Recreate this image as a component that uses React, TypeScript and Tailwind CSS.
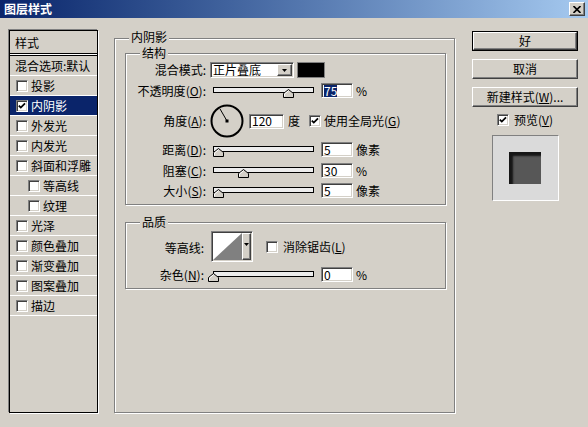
import type { ReactNode } from 'react'

const sunken =
  'border border-t-[#808080] border-l-[#808080] border-r-white border-b-white bg-white shadow-[inset_1px_1px_0_#404040,inset_-1px_-1px_0_#d4d0c8]'
const raised =
  'border border-t-white border-l-white border-r-[#404040] border-b-[#404040] bg-[#d4d0c8] shadow-[inset_-1px_-1px_0_#808080]'

function Mn({ children }: { children: string }) {
  return (
    <>
      (<span className="underline underline-offset-[1px]">{children}</span>)
    </>
  )
}

function Check({ checked }: { checked?: boolean }) {
  return (
    <span className={`flex h-[12px] w-[12px] shrink-0 items-center justify-center ${sunken}`}>
      {checked && (
        <svg width="8" height="8" viewBox="0 0 8 8">
          <path d="M0.8 3.6 L2.8 5.6 L7 1.4" stroke="#000" strokeWidth="1.8" fill="none" />
        </svg>
      )}
    </span>
  )
}

function Group({
  title,
  className,
  labelClass = '-top-[7px]',
  children,
}: {
  title: string
  className: string
  labelClass?: string
  children?: ReactNode
}) {
  return (
    <div className={`relative flex flex-col border border-[#808080] shadow-[inset_1px_1px_0_#fff,1px_1px_0_#fff] ${className}`}>
      <span className={`absolute left-[14px] h-[12px] bg-[#d4d0c8] px-[2px] leading-[12px] ${labelClass}`}>{title}</span>
      {children}
    </div>
  )
}

function Slider({ value }: { value: number }) {
  return (
    <div className="relative h-[15px] w-[101px] pt-[4px]">
      <div className="h-[6px] border border-black bg-[#ececec]" />
      <svg className="absolute top-[6px]" style={{ left: value - 5 }} width="11" height="9" viewBox="0 0 11 9">
        <path d="M5.5 0.5 L10.5 4.5 V8.5 H0.5 V4.5 Z" fill="#d4d0c8" stroke="#000" />
        <path d="M1.5 7.5 V5 L5.5 1.8" stroke="#fff" fill="none" />
      </svg>
    </div>
  )
}

function NumField({ value, wide, selected }: { value: string; wide?: boolean; selected?: boolean }) {
  return (
    <span className={`flex h-[15px] items-center pl-[2px] ${wide ? 'w-[35px]' : 'w-[32px]'} ${sunken}`}>
      <span className={selected ? 'bg-[#0a246a] text-white' : ''}>{value}</span>
    </span>
  )
}

function SliderRow({ label, mn, value, unit, className }: { label: string; mn: string; value: number; unit: string; className: string }) {
  return (
    <div className={`flex h-[15px] items-center ${className}`}>
      <span className="w-[80px] text-right">
        {label}
        <Mn>{mn}</Mn>:
      </span>
      <span className="ml-[7px]">
        <Slider value={value} />
      </span>
      <span className="ml-[7px]">
        <NumField value={String(value)} selected={mn === 'O'} />
      </span>
      <span className="ml-[3px]">{unit}</span>
    </div>
  )
}

const listItems: Array<{ label: string; checked?: boolean; indent?: boolean; active?: boolean }> = [
  { label: '投影' },
  { label: '内阴影', checked: true, active: true },
  { label: '外发光' },
  { label: '内发光' },
  { label: '斜面和浮雕' },
  { label: '等高线', indent: true },
  { label: '纹理', indent: true },
  { label: '光泽' },
  { label: '颜色叠加' },
  { label: '渐变叠加' },
  { label: '图案叠加' },
  { label: '描边' },
]

function StyleList() {
  return (
    <div className="ml-[9px] mt-[12px] flex h-[383px] w-[89px] flex-col border border-black shadow-[-1px_-1px_0_#808080,1px_1px_0_#fff]">
      <div className="flex h-[22px] items-center pl-[5px] pt-[2px]">样式</div>
      <div className="h-[3px] border-y border-black bg-white" />
      <div className="flex h-[20px] items-center overflow-hidden whitespace-nowrap border-b border-white pl-[5px]">混合选项:默认</div>
      {listItems.map((item) => (
        <div
          key={item.label}
          className={`flex h-[20px] items-center gap-[3px] border-b border-white ${item.indent ? 'pl-[18px]' : 'pl-[6px]'} ${
            item.active ? 'bg-[#0a246a] text-white' : ''
          }`}
        >
          <Check checked={item.checked} />
          <span>{item.label}</span>
        </div>
      ))}
    </div>
  )
}

function Dial() {
  const a = (120 * Math.PI) / 180
  return (
    <svg width="34" height="34" viewBox="0 0 34 34">
      <circle cx="17" cy="17" r="15.5" fill="none" stroke="#000" strokeWidth="2" />
      <line x1="17" y1="17" x2={17 + 14 * Math.cos(a)} y2={17 - 14 * Math.sin(a)} stroke="#000" strokeWidth="1" />
      <rect x="15.5" y="15.5" width="3" height="3" fill="#000" />
    </svg>
  )
}

function DownArrow() {
  return (
    <svg width="5" height="3" viewBox="0 0 5 3">
      <path d="M0 0 H5 L2.5 3 Z" fill="#000" />
    </svg>
  )
}

function Structure() {
  return (
    <Group title="结构" className="ml-[10px] mt-[14px] h-[152px] w-[321px]">
      <div className="mt-[8px] flex h-[16px] items-center">
        <span className="w-[80px] text-right">混合模式:</span>
        <span className={`ml-[4px] flex h-[16px] w-[84px] items-center p-[1px] ${sunken}`}>
          <span className="flex-1 pl-[1px]">正片叠底</span>
          <span className={`flex h-full w-[15px] items-center justify-center ${raised}`}>
            <DownArrow />
          </span>
        </span>
        <span className="ml-[3px] h-[16px] w-[28px] border border-[#808080] bg-black" />
      </div>
      <SliderRow className="mt-[5px]" label="不透明度" mn="O" value={75} unit="%" />
      <div className="mt-[6px] flex h-[34px] items-center">
        <span className="w-[80px] text-right">
          角度<Mn>A</Mn>:
        </span>
        <span className="ml-[4px] flex">
          <Dial />
        </span>
        <span className="ml-[5px]">
          <NumField value="120" wide />
        </span>
        <span className="ml-[4px]">度</span>
        <span className="ml-[9px]">
          <Check checked />
        </span>
        <span className="ml-[3px]">
          使用全局光<Mn>G</Mn>
        </span>
      </div>
      <SliderRow className="mt-[4px]" label="距离" mn="D" value={5} unit="像素" />
      <SliderRow className="mt-[6px]" label="阻塞" mn="C" value={30} unit="%" />
      <SliderRow className="mt-[5px]" label="大小" mn="S" value={5} unit="像素" />
    </Group>
  )
}

function Quality() {
  return (
    <Group title="品质" className="ml-[10px] mt-[17px] h-[67px] w-[321px]">
      <div className="mt-[8px] flex h-[31px] items-center">
        <span className="w-[78px] pt-[2px] text-right">等高线:</span>
        <span className={`ml-[7px] flex h-[31px] w-[42px] p-[1px] ${sunken}`}>
          <svg className="h-full flex-1" viewBox="0 0 30 27" preserveAspectRatio="none">
            <rect width="30" height="27" fill="#fff" />
            <polygon points="0,27 30,0 30,27" fill="#808080" />
          </svg>
          <span className={`flex w-[9px] items-center justify-center pb-[4px] ${raised}`}>
            <DownArrow />
          </span>
        </span>
        <span className="ml-[13px]">
          <Check />
        </span>
        <span className="ml-[5px]">
          消除锯齿<Mn>L</Mn>
        </span>
      </div>
      <div className="mt-[5px] flex h-[15px] items-center">
        <span className="w-[78px] text-right">
          杂色<Mn>N</Mn>:
        </span>
        <span className="ml-[9px]">
          <Slider value={0} />
        </span>
        <span className="ml-[7px]">
          <NumField value="0" />
        </span>
        <span className="ml-[3px]">%</span>
      </div>
    </Group>
  )
}

function Button({ children, isDefault }: { children: ReactNode; isDefault?: boolean }) {
  const inner = <div className={`flex h-full w-full items-center justify-center ${raised}`}>{children}</div>
  return isDefault ? (
    <div className="h-[20px] w-[106px] border border-black">{inner}</div>
  ) : (
    <div className="h-[20px] w-[106px]">{inner}</div>
  )
}

export default function App() {
  return (
    <div className="flex h-[427px] w-[588px] flex-col overflow-hidden bg-[#d4d0c8] font-['Noto_Sans_CJK_SC',sans-serif] text-[12px] leading-[12px] text-black">
      <div className="flex h-[18px] items-center justify-between bg-linear-to-r from-[#0a246a] to-[#a6caf0] pl-[4px] pr-[3px]">
        <span className="font-bold text-white">图层样式</span>
        <span className={`flex h-[14px] w-[16px] items-center justify-center ${raised}`}>
          <svg width="8" height="7" viewBox="0 0 8 7">
            <path d="M0.5 0 L7.5 7 M7.5 0 L0.5 7" stroke="#000" strokeWidth="1.6" />
          </svg>
        </span>
      </div>
      <div className="flex items-start">
        <StyleList />
        <Group title="内阴影" labelClass="-top-[8px]" className="ml-[16px] mt-[20px] h-[375px] w-[341px]">
          <Structure />
          <Quality />
        </Group>
        <div className="ml-[17px] mt-[13px] flex w-[106px] flex-col">
          <Button isDefault>好</Button>
          <div className="mt-[8px]">
            <Button>取消</Button>
          </div>
          <div className="mt-[8px]">
            <Button>
              新建样式<Mn>W</Mn>...
            </Button>
          </div>
          <div className="mt-[6px] flex h-[13px] items-center justify-center gap-[5px]">
            <Check checked />
            <span>
              预览<Mn>V</Mn>
            </span>
          </div>
          <div className="mt-[9px] flex h-[66px] w-[67px] items-center justify-center self-center border border-t-[#808080] border-l-[#808080] border-r-white border-b-white bg-[#dadada]">
            <div className="h-[32px] w-[32px] bg-[#575757] shadow-[inset_4px_4px_2px_rgba(0,0,0,0.75)]" />
          </div>
        </div>
      </div>
    </div>
  )
}
